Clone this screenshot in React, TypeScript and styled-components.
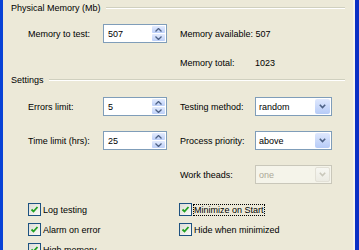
import styled, { createGlobalStyle } from "styled-components";

const GlobalStyle = createGlobalStyle`
  html, body {
    margin: 0;
    padding: 0;
    background: #ece9d8;
  }
  body {
    font-family: "Liberation Sans", Arial, sans-serif;
    font-size: 9px;
    color: #000;
  }
`;

const Window = styled.div`
  width: 359px;
  height: 250px;
  overflow: hidden;
  box-sizing: border-box;
  border-left: 3px solid #0842d6;
  border-right: 4px solid #0a2fc4;
  background: #ece9d8;
  box-shadow: inset -2px 0 0 #f4f3ee;
  padding: 0 10px 0 8px;
  display: flex;
  flex-direction: column;

  & > * {
    flex-shrink: 0;
  }
`;

const GroupHead = styled.div`
  display: flex;
  align-items: center;
  gap: 5px;
  height: 16px;
  white-space: nowrap;

  &::after {
    content: "";
    flex: 1;
    border-top: 1px solid #d0d0bf;
    border-bottom: 1px solid #fff;
  }
`;

const FieldGrid = styled.div<{ $top: number; $gap: number }>`
  display: grid;
  grid-template-columns: 75px 77px 75px 77px;
  grid-auto-rows: 19px;
  row-gap: ${(p) => p.$gap}px;
  margin-top: ${(p) => p.$top}px;
  padding-left: 17px;
  align-items: center;
`;

const Label = styled.span<{ $col?: number; $span?: number }>`
  grid-column: ${(p) => (p.$col ? `${p.$col} / span ${p.$span ?? 1}` : "auto")};
  white-space: nowrap;
`;

const SpinBox = styled.div`
  width: 64px;
  height: 19px;
  box-sizing: border-box;
  border: 1px solid #7f9db9;
  background: #fff;
  display: flex;
  align-items: center;
`;

const SpinValue = styled.span`
  flex: 1;
  padding-left: 4px;
`;

const SpinButtons = styled.div`
  width: 14px;
  height: 100%;
  box-sizing: border-box;
  padding: 1px 1px 1px 0;
  display: flex;
  flex-direction: column;
  gap: 1px;
`;

const SpinBtn = styled.div`
  flex: 1;
  border-radius: 1px;
  background: linear-gradient(#e3ebfd, #bccff8);
  display: flex;
  align-items: center;
  justify-content: center;
`;

const Select = styled.div<{ $disabled?: boolean }>`
  width: 77px;
  height: 19px;
  box-sizing: border-box;
  border: 1px solid ${(p) => (p.$disabled ? "#c9c7ba" : "#7f9db9")};
  background: ${(p) => (p.$disabled ? "#f5f4ea" : "#fff")};
  color: ${(p) => (p.$disabled ? "#aca899" : "#000")};
  display: flex;
  align-items: center;
`;

const SelectValue = styled.span`
  flex: 1;
  padding-left: 3px;
`;

const DropBtn = styled.div<{ $disabled?: boolean }>`
  width: 15px;
  height: 15px;
  margin-right: 1px;
  border-radius: 2px;
  background: ${(p) =>
    p.$disabled
      ? "linear-gradient(#f7f7f2, #ecebe3)"
      : "linear-gradient(#dfe8fd, #b6cbf7)"};
  border: ${(p) => (p.$disabled ? "1px solid #e2e0d6" : "none")};
  box-sizing: border-box;
  display: flex;
  align-items: center;
  justify-content: center;
`;

const CheckGrid = styled.div`
  display: grid;
  grid-template-columns: 151px 1fr;
  grid-auto-rows: 13px;
  row-gap: 7px;
  margin-top: 19px;
  padding-left: 17px;
`;

const CheckRow = styled.div<{ $col: number }>`
  grid-column: ${(p) => p.$col};
  display: flex;
  align-items: center;
  gap: 1px;
  white-space: nowrap;
`;

const Box = styled.span`
  width: 13px;
  height: 13px;
  box-sizing: border-box;
  border: 1px solid #1c5180;
  background: linear-gradient(135deg, #dcdcd5, #fbfbf9);
  display: flex;
  align-items: center;
  justify-content: center;
  flex-shrink: 0;
`;

const CheckText = styled.span<{ $focus?: boolean }>`
  padding: 1px 1px;
  outline: ${(p) => (p.$focus ? "1px dotted #000" : "none")};
  outline-offset: -1px;
`;

function Arrow({ up, color = "#4d6185" }: { up?: boolean; color?: string }) {
  return (
    <svg width="7" height="4" viewBox="0 0 7 4">
      <path
        d={up ? "M0.5 3.5 L3.5 0.5 L6.5 3.5" : "M0.5 0.5 L3.5 3.5 L6.5 0.5"}
        fill="none"
        stroke={color}
        strokeWidth="1.3"
      />
    </svg>
  );
}

function Spin({ value }: { value: string }) {
  return (
    <SpinBox>
      <SpinValue>{value}</SpinValue>
      <SpinButtons>
        <SpinBtn>
          <Arrow up />
        </SpinBtn>
        <SpinBtn>
          <Arrow />
        </SpinBtn>
      </SpinButtons>
    </SpinBox>
  );
}

function Combo({ value, disabled }: { value: string; disabled?: boolean }) {
  return (
    <Select $disabled={disabled}>
      <SelectValue>{value}</SelectValue>
      <DropBtn $disabled={disabled}>
        <svg width="7" height="5" viewBox="0 0 7 5">
          <path
            d="M0.8 0.8 L3.5 3.5 L6.2 0.8"
            fill="none"
            stroke={disabled ? "#c9c7ba" : "#4d6185"}
            strokeWidth="1.6"
          />
        </svg>
      </DropBtn>
    </Select>
  );
}

function Check({ label, col, focus }: { label: string; col: number; focus?: boolean }) {
  return (
    <CheckRow $col={col}>
      <Box>
        <svg width="9" height="9" viewBox="0 0 9 9">
          <path d="M1.5 4.5 L3.5 6.5 L7.5 2" fill="none" stroke="#21a121" strokeWidth="1.8" />
        </svg>
      </Box>
      <CheckText $focus={focus}>{label}</CheckText>
    </CheckRow>
  );
}

export default function App() {
  return (
    <>
      <GlobalStyle />
      <Window>
        <GroupHead>Physical Memory (Mb)</GroupHead>
        <FieldGrid $top={8} $gap={10}>
          <Label>Memory to test:</Label>
          <Spin value="507" />
          <Label $col={3} $span={2}>Memory available: 507</Label>
          <Label $col={3}>Memory total:</Label>
          <Label>1023</Label>
        </FieldGrid>

        <GroupHead>Settings</GroupHead>
        <FieldGrid $top={9} $gap={15}>
          <Label>Errors limit:</Label>
          <Spin value="5" />
          <Label>Testing method:</Label>
          <Combo value="random" />
          <Label>Time limit (hrs):</Label>
          <Spin value="25" />
          <Label>Process priority:</Label>
          <Combo value="above" />
          <Label $col={3}>Work theads:</Label>
          <Combo value="one" disabled />
        </FieldGrid>

        <CheckGrid>
          <Check col={1} label="Log testing" />
          <Check col={2} label="Minimize on Start" focus />
          <Check col={1} label="Alarm on error" />
          <Check col={2} label="Hide when minimized" />
          <Check col={1} label="High memory" />
        </CheckGrid>
      </Window>
    </>
  );
}
